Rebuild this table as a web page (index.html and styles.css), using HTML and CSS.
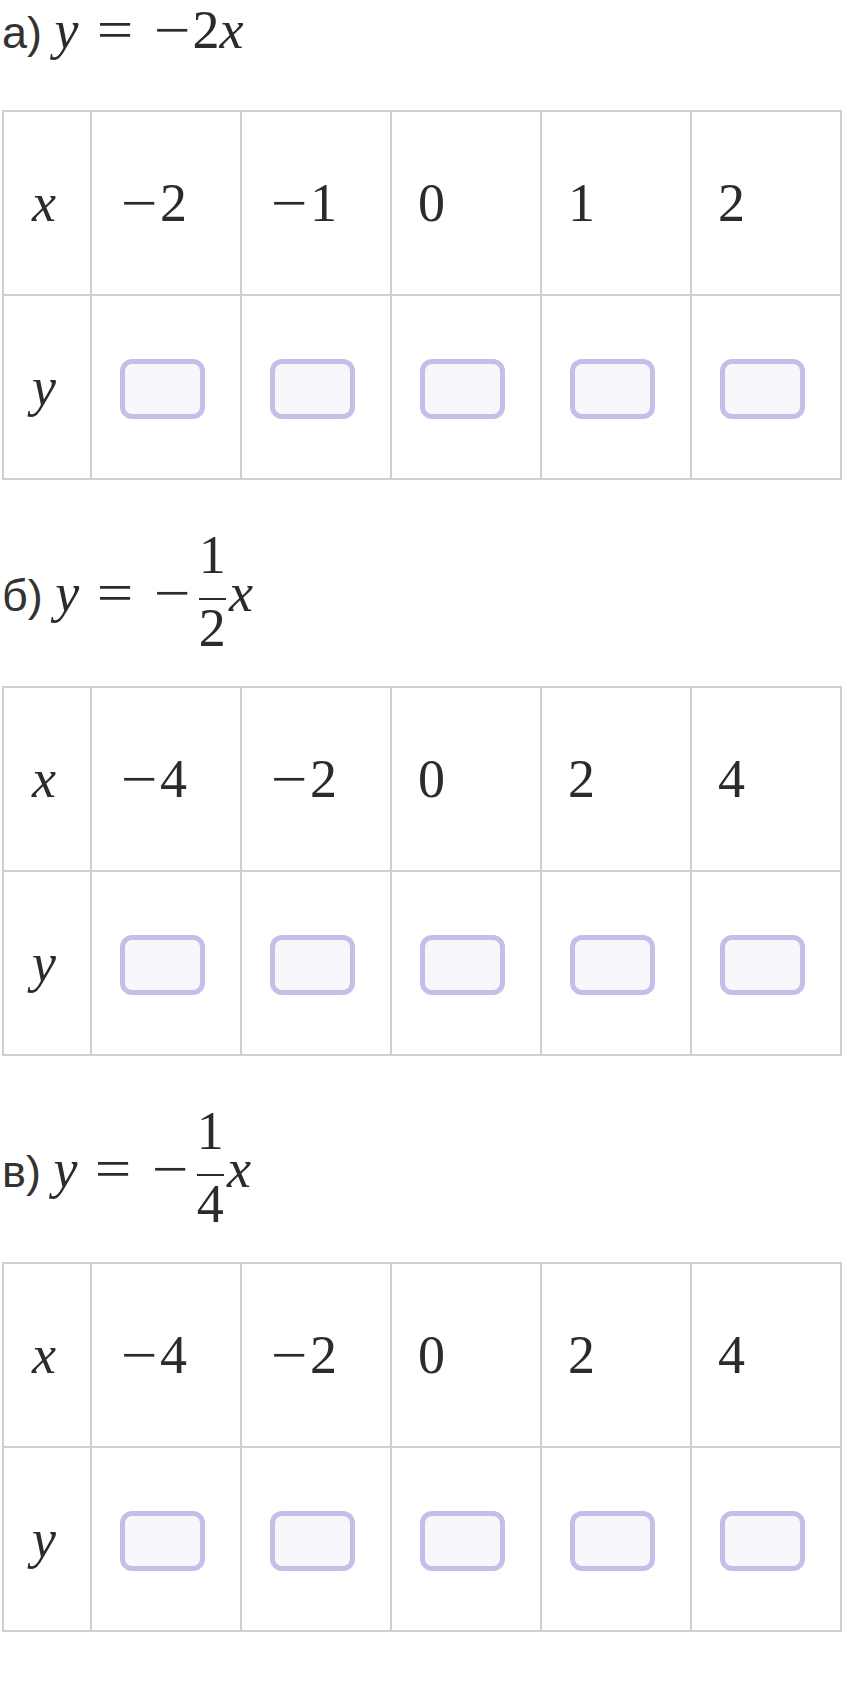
FILE: index.html
```html
<!DOCTYPE html>
<html lang="ru">
<head>
  <meta charset="UTF-8" />
  <meta name="viewport" content="width=device-width, initial-scale=1.0" />
  <title>Таблицы значений функций</title>
  <link rel="stylesheet" href="styles.css">
</head>
<body>
  <main class="tasks">
    <section class="task">
      <p class="eq"><span class="label">а)</span> <span class="math"><i>y</i><span class="rel">=</span><span class="minus">−</span>2<i>x</i></span></p>
      <table class="values">
        <colgroup><col class="head-col"><col><col><col><col><col></colgroup>
        <tr>
          <th><i>x</i></th>
          <td><span class="minus">−</span>2</td>
          <td><span class="minus">−</span>1</td>
          <td>0</td>
          <td>1</td>
          <td>2</td>
        </tr>
        <tr>
          <th><i>y</i></th>
          <td><div class="answer"></div></td>
          <td><div class="answer"></div></td>
          <td><div class="answer"></div></td>
          <td><div class="answer"></div></td>
          <td><div class="answer"></div></td>
        </tr>
      </table>
    </section>

    <section class="task">
      <p class="eq eq-frac"><span class="label">б)</span> <span class="math"><i>y</i><span class="rel">=</span><span class="minus">−</span><span class="frac"><span class="num">1</span><span class="bar"></span><span class="den">2</span></span><i>x</i></span></p>
      <table class="values">
        <colgroup><col class="head-col"><col><col><col><col><col></colgroup>
        <tr>
          <th><i>x</i></th>
          <td><span class="minus">−</span>4</td>
          <td><span class="minus">−</span>2</td>
          <td>0</td>
          <td>2</td>
          <td>4</td>
        </tr>
        <tr>
          <th><i>y</i></th>
          <td><div class="answer"></div></td>
          <td><div class="answer"></div></td>
          <td><div class="answer"></div></td>
          <td><div class="answer"></div></td>
          <td><div class="answer"></div></td>
        </tr>
      </table>
    </section>

    <section class="task">
      <p class="eq eq-frac"><span class="label">в)</span> <span class="math"><i>y</i><span class="rel">=</span><span class="minus">−</span><span class="frac"><span class="num">1</span><span class="bar"></span><span class="den">4</span></span><i>x</i></span></p>
      <table class="values">
        <colgroup><col class="head-col"><col><col><col><col><col></colgroup>
        <tr>
          <th><i>x</i></th>
          <td><span class="minus">−</span>4</td>
          <td><span class="minus">−</span>2</td>
          <td>0</td>
          <td>2</td>
          <td>4</td>
        </tr>
        <tr>
          <th><i>y</i></th>
          <td><div class="answer"></div></td>
          <td><div class="answer"></div></td>
          <td><div class="answer"></div></td>
          <td><div class="answer"></div></td>
          <td><div class="answer"></div></td>
        </tr>
      </table>
    </section>
  </main>
</body>
</html>
```

FILE: styles.css
```css
body {
  margin: 0;
  background: #fff;
  color: #2b2b2b;
  font-family: 'Liberation Sans', Arial, sans-serif;
}
.tasks {
  padding: 3px 2px 0;
}
.task {
  margin-bottom: 48px;
}
.eq {
  margin: 0 0 53px;
  font-size: 45px;
  line-height: 1;
  color: #333;
}
.eq.eq-frac {
  margin-bottom: 31px;
}
.math {
  font-family: 'Liberation Serif', 'Times New Roman', serif;
  font-size: 54px;
  color: #2b2b2b;
}
.math i, .values i {
  font-style: italic;
}

/* operators stretched a little, like the TeX glyphs */
.rel, .minus {
  display: inline-block;
  width: 42px;
  text-align: center;
  transform: scaleX(1.2);
}
.rel {
  margin: 0 15px;
}
.frac {
  display: inline-flex;
  flex-direction: column;
  align-items: center;
  vertical-align: 38px;
  margin: 0 0.06em 0 0.1em;
}
.num, .den {
  line-height: 1;
}
.bar {
  align-self: stretch;
  height: 2px;
  margin: 16px 0 1px;
  background: #2b2b2b;
}

.values {
  width: 840px;
  table-layout: fixed;
  border-collapse: collapse;
  font-family: 'Liberation Serif', 'Times New Roman', serif;
  font-size: 54px;
  line-height: 1.2;
}
.values .head-col {
  width: 88px;
}
.values th, .values td {
  height: 182px;
  padding: 0 0 0 26px;
  border: 2px solid #cfcfcf;
  text-align: left;
  vertical-align: middle;
  font-weight: normal;
}
.values th {
  padding-left: 28px;
}
.answer {
  width: 75px;
  height: 50px;
  margin: 3px 0 0 2px;
  border: 5px solid #c4bfe8;
  border-radius: 12px;
  background: #f7f7fc;
}
```
